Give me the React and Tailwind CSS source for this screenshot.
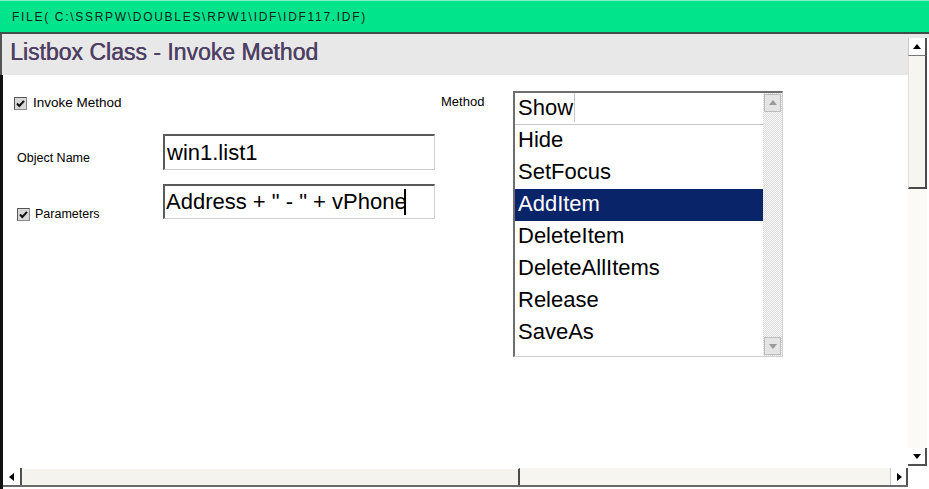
import React from 'react';

const font = { fontFamily: '"Liberation Sans", Arial, sans-serif' };

function CheckBox() {
  return (
    <svg width="13" height="13" viewBox="0 0 13 13" className="shrink-0">
      <rect x="0.5" y="0.5" width="12" height="12" fill="#d8d8d8" stroke="#8a8a8a" />
      <path d="M0.5 12.5 V0.5 H12.5" fill="none" stroke="#555" />
      <path d="M3 6.5 L5.3 9 L10 3.8" fill="none" stroke="#111" strokeWidth="2" />
    </svg>
  );
}

function Arrow({ dir, color = '#000' }) {
  const d = {
    up: 'M1 7 L5 2 L9 7 Z',
    down: 'M1 3 L5 8 L9 3 Z',
    left: 'M7 1 L2 5 L7 9 Z',
    right: 'M3 1 L8 5 L3 9 Z',
  }[dir];
  return (
    <svg width="10" height="10" viewBox="0 0 10 10">
      <path d={d} fill={color} />
    </svg>
  );
}

const methods = ['Show', 'Hide', 'SetFocus', 'AddItem', 'DeleteItem', 'DeleteAllItems', 'Release', 'SaveAs'];

export default function App() {
  return (
    <div className="w-[929px] h-[489px] bg-white flex flex-col overflow-hidden" style={font}>
      {/* file path bar */}
      <div className="h-[32px] bg-[#02e48b] border-t border-[#7ff0c4] flex items-center pl-[12px]">
        <span className="text-[12px] text-[#14241b] tracking-[1.7px]">FILE( C:\SSRPW\DOUBLES\RPW1\IDF\IDF117.IDF)</span>
      </div>
      <div className="h-[2px] bg-[#3d4f48]" />

      <div className="flex flex-1">
        {/* left side */}
        <div className="w-[908px] flex flex-col">
          <div className="h-[41px] bg-[#e8e8e8] border-l-2 border-[#555] flex items-start pt-[7px] pl-[8px]">
            <h1 className="text-[23px] text-[#4e4063] leading-none [text-shadow:0.4px_0_0_#4e4063]">Listbox Class - Invoke Method</h1>
          </div>

          <div className="flex-1 flex flex-col border-l-[3px] border-[#111]">
            <div className="flex-1 flex items-start">
              {/* form fields */}
              <div className="w-[432px] pl-[11px] pt-[22px] flex flex-col">
                <div className="flex items-center gap-[6px] h-[13px]">
                  <CheckBox />
                  <span className="text-[13.5px] text-black">Invoke Method</span>
                </div>

                <div className="flex items-start mt-[24px]">
                  <span className="w-[149px] pl-[3px] pt-[15px] text-[12.5px] text-black">Object Name</span>
                  <div className="w-[272px] h-[36px] border-t-2 border-l-2 border-[#5a5a5a] border-r border-b border-r-[#cfcfcf] border-b-[#cfcfcf] flex items-center pl-[2px]">
                    <span className="text-[22px] text-black leading-none">win1.list1</span>
                  </div>
                </div>

                <div className="flex items-start mt-[14px]">
                  <div className="w-[149px] pl-[3px] pt-[21px] flex items-center gap-[5px]">
                    <CheckBox />
                    <span className="text-[12.5px] text-black">Parameters</span>
                  </div>
                  <div className="w-[272px] h-[35px] border-t-2 border-l-2 border-[#5a5a5a] border-r border-b border-r-[#cfcfcf] border-b-[#cfcfcf] flex items-center pl-[1px]">
                    <span className="text-[22px] text-black leading-none whitespace-pre">Address + " - " + vPhon</span>
                    <span className="text-[22px] text-black leading-none">e</span>
                    <span className="w-[2px] h-[26px] bg-black -ml-[3px]" />
                  </div>
                </div>
              </div>

              {/* method label */}
              <span className="ml-[6px] mt-[17px] w-[72px] text-[13px] text-black">Method</span>

              {/* listbox */}
              <div className="mt-[16px] w-[270px] h-[266px] border-t-2 border-l-2 border-[#6e6e6e] border-r border-b border-r-[#d0d0d0] border-b-[#d0d0d0] flex">
                <div className="flex-1 flex flex-col">
                  {methods.map((m) => (
                    <div
                      key={m}
                      className={
                        'h-[32px] flex items-center pl-[3px] pb-[2px] text-[22px] leading-none ' +
                        (m === 'AddItem' ? 'bg-[#0a246a] text-white' : 'text-black') +
                        (m === 'Show' ? ' border-b border-[#c8c8c8]' : '')
                      }
                    >
                      <span className={m === 'Show' ? 'pr-[1px] h-full flex items-center border-r border-[#c8c8c8]' : ''}>{m}</span>
                    </div>
                  ))}
                </div>
                <div className="w-[19px] flex flex-col bg-[repeating-conic-gradient(#dadada_0%_25%,#fbfbfb_0%_50%)] bg-[length:2px_2px]">
                  <div className="h-[18px] mx-[1px] mt-[1px] bg-[#e4e4e4] border border-[#bdbdbd] flex items-center justify-center">
                    <Arrow dir="up" color="#9a9a9a" />
                  </div>
                  <div className="flex-1" />
                  <div className="h-[18px] mx-[1px] mb-[1px] bg-[#e4e4e4] border border-[#bdbdbd] flex items-center justify-center">
                    <Arrow dir="down" color="#9a9a9a" />
                  </div>
                </div>
              </div>
            </div>

            {/* horizontal scrollbar */}
            <div className="h-[19px] bg-[#f6f5f0] border-b-2 border-[#6a6a6a] flex">
              <div className="w-[19px] bg-white border-r-2 border-[#505050] flex items-center justify-center">
                <Arrow dir="left" />
              </div>
              <div className="ml-[2px] w-[496px] bg-[#f4f3ee] border-t border-t-white border-r-2 border-r-[#4a4a4a]" />
              <div className="flex-1" />
              <div className="w-[18px] bg-white border-r-2 border-l border-l-[#c8c8c8] border-r-[#505050] flex items-center justify-center">
                <Arrow dir="right" />
              </div>
            </div>
            <div className="h-[2px]" />
          </div>
        </div>

        {/* vertical scrollbar */}
        <div className="w-[21px] flex flex-col bg-white">
          <div className="h-[4px] bg-[#e8e8e8]" />
          <div className="w-[19px] h-[428px] flex flex-col bg-[#fbfaf6]">
            <div className="h-[18px] bg-white border-l border-[#c8c8c8] border-r-2 border-b border-r-[#505050] border-b-[#777] flex items-center justify-center">
              <Arrow dir="up" />
            </div>
            <div className="h-[133px] bg-[#f6f5f0] border-l border-[#e0e0e0] border-r-2 border-b-2 border-r-[#4a4a4a] border-b-[#4a4a4a]" />
            <div className="flex-1" />
            <div className="h-[18px] bg-white border-r-2 border-b-2 border-[#505050] flex items-center justify-center">
              <Arrow dir="down" />
            </div>
          </div>
        </div>
      </div>
    </div>
  );
}
